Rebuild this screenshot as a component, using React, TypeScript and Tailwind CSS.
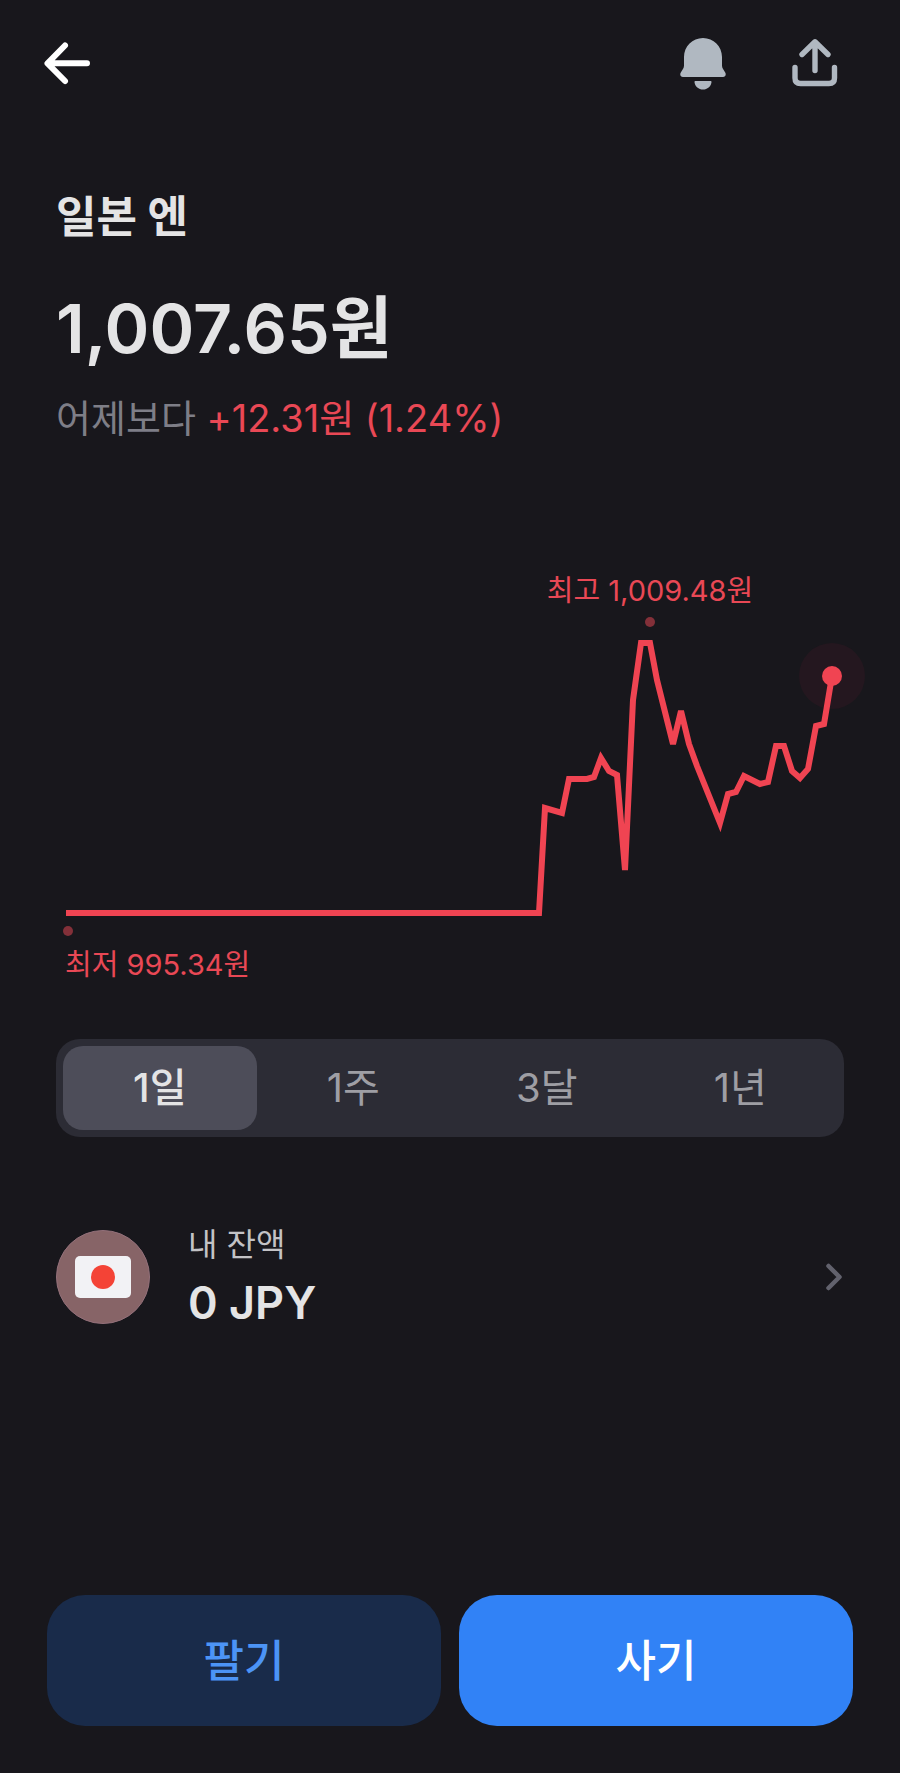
import { useState } from "react";

const points: [number, number][] = [
  [66, 353], [539, 353], [545, 248], [562, 253], [569, 219], [587, 219], [594, 217],
  [601, 198], [609, 211], [617, 215], [625, 310], [633, 140], [641, 83], [650, 83],
  [657, 120], [673, 184], [681, 151], [689, 184], [697, 206], [720, 263], [728, 234],
  [736, 232], [744, 216], [760, 224], [768, 222], [776, 186], [784, 186], [792, 211],
  [800, 218], [808, 209], [816, 166], [824, 164], [832, 116],
];

const periods = ["1일", "1주", "3달", "1년"];

function Header() {
  return (
    <header className="flex items-center justify-between pt-8 pr-14 pl-9">
      <button type="button" aria-label="뒤로" className="size-15">
        <svg viewBox="0 0 60 60" className="size-full" fill="none" stroke="#ffffff" strokeWidth="6" strokeLinecap="round" strokeLinejoin="round">
          <path d="M29 13.5 11.5 31.3 29 49M12 31.3h39" />
        </svg>
      </button>
      <div className="flex gap-13">
        <button type="button" aria-label="알림" className="size-15">
          <svg viewBox="0 0 60 60" className="size-full" fill="#b0b8c1">
            <path d="M31 6C20.500 6 12 14.500 12 25v8.500c0 1.200-.3 2.200-.9 3.200l-2.300 3.900C7.600 42.600 8.500 45 10.800 45h40.400c2.300 0 3.200-2.400 2-4.400l-2.300-3.900c-.6-1-.9-2-.9-3.200V25C50 14.500 41.500 6 31 6Z" />
            <path d="M23.500 49h15c.7 0 1.100.5 1 1.200C38.900 54.500 35.400 57.500 31 57.500s-7.900-3-8.500-7.300c-.1-.7.300-1.200 1-1.200Z" />
          </svg>
        </button>
        <button type="button" aria-label="공유" className="size-15">
          <svg viewBox="0 0 60 60" className="size-full" fill="none" stroke="#b0b8c1" strokeWidth="5.400" strokeLinecap="round" strokeLinejoin="round">
            <path d="M31 10v28.500M18 22.500 31 9.800l13 12.700M11 35.500v10.500c0 3.800 1.800 5.500 5.500 5.500h28.500c3.700 0 5.500-1.700 5.500-5.500V35.500" />
          </svg>
        </button>
      </div>
    </header>
  );
}

function Chart() {
  return (
    <svg viewBox="0 0 900 439" role="img" aria-label="일본 엔 환율 그래프" className="mt-28 block w-full text-[29px]" fill="#e94855">
      <circle cx="832" cy="116" r="33" fill="#24171f" />
      <polyline points={points.map((p) => p.join(",")).join(" ")} fill="none" stroke="#f04452" strokeWidth="6" />
      <circle cx="832" cy="116" r="10" fill="#f04452" />
      <circle cx="650" cy="62" r="5" fill="#833039" />
      <circle cx="68" cy="371" r="5" fill="#833039" />
      <text x="650" y="41" textAnchor="middle">최고 1,009.48원</text>
      <text x="65" y="415">최저 995.34원</text>
    </svg>
  );
}

function PeriodTabs() {
  const [active, setActive] = useState(periods[0]);
  return (
    <div role="tablist" aria-label="기간" className="mx-14 mt-10 flex rounded-3xl bg-[#2c2c35] p-[7px]">
      {periods.map((period) => (
        <button
          key={period}
          type="button"
          role="tab"
          aria-selected={period === active}
          onClick={() => setActive(period)}
          className={
            period === active
              ? "h-21 flex-1 rounded-[20px] bg-[#4d4d59] text-[40px] font-medium text-[#e4e4e5]"
              : "h-21 flex-1 rounded-[20px] text-[40px] text-[#9e9ea4]"
          }
        >
          {period}
        </button>
      ))}
    </div>
  );
}

function Balance() {
  return (
    <a href="#balance" className="mx-14 mt-20 flex items-center">
      <span className="flex size-[94px] items-center justify-center rounded-full border border-[#93707a] bg-[#876467]">
        <span className="flex h-[42px] w-14 items-center justify-center rounded-[5px] bg-[#f2f2f5]">
          <span className="size-6 rounded-full bg-[#f44336]" />
        </span>
      </span>
      <span className="ml-[38px] flex flex-1 flex-col pb-1">
        <span className="text-[32px] leading-[56px] text-[#c3c3c6]">내 잔액</span>
        <span className="text-[45px] leading-[60px] font-semibold text-[#e4e4e5]">0 JPY</span>
      </span>
      <svg viewBox="0 0 24 36" className="h-9 w-6" fill="none" stroke="#62626d" strokeWidth="4.500" strokeLinecap="round" strokeLinejoin="round">
        <path d="M8.500 7 19.500 18 8.500 29" />
      </svg>
    </a>
  );
}

export default function App() {
  return (
    <div className="flex min-h-screen flex-col bg-[#18171c] font-['Inter','Noto_Sans_CJK_KR',sans-serif]">
      <Header />
      <main>
        <div className="px-14 pt-[93px]">
          <h1 className="text-[44px] leading-[64px] font-bold text-[#e4e4e5]">일본 엔</h1>
          <p className="mt-[35px] text-[68px] leading-[88px] font-semibold text-[#e4e4e5]">1,007.65원</p>
          <p className="mt-4 text-[38px] leading-[60px] text-[#e94855]">
            <span className="text-[#7e7e87]">어제보다</span> +12.31원 (1.24%)
          </p>
        </div>
        <Chart />
        <PeriodTabs />
        <Balance />
      </main>
      <footer className="mt-auto flex gap-[18px] px-[47px] pb-[47px]">
        <button type="button" className="h-[131px] flex-1 rounded-[38px] bg-[#192b4a] text-[44px] font-medium text-[#4c94f6]">팔기</button>
        <button type="button" className="h-[131px] flex-1 rounded-[38px] bg-[#3182f6] text-[44px] font-medium text-white">사기</button>
      </footer>
    </div>
  );
}
